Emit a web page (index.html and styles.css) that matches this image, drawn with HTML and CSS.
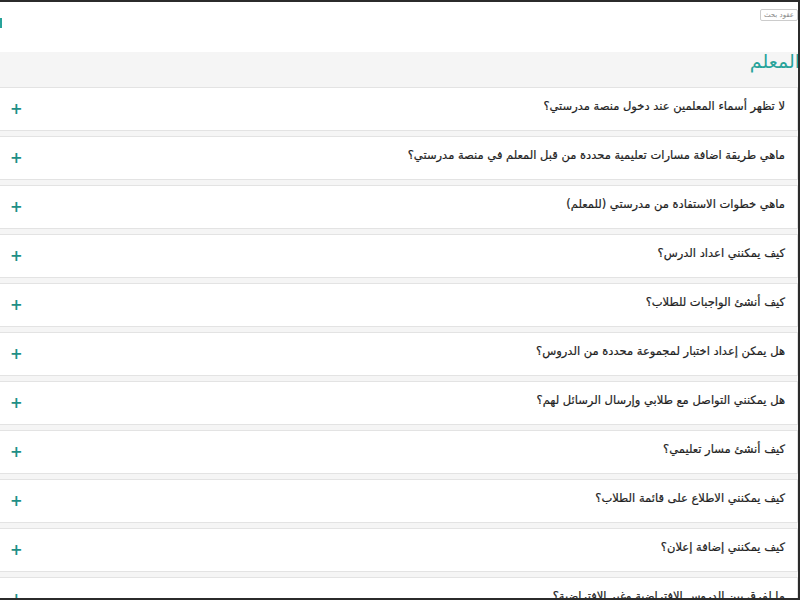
FILE: index.html
```html
<!DOCTYPE html>
<html lang="ar" dir="rtl">
  <head>
    <meta charset="UTF-8" />
    <title>الأسئلة الشائعة - المعلم</title>
    <link rel="stylesheet" href="styles.css">
  </head>
  <body>
    <div class="frame">
      <header class="topbar">
        <span class="topbar-btn">عقود بحث</span>
        <span class="topbar-mark"></span>
      </header>

      <section class="faq">
        <h2 class="faq-title">المعلم</h2>
        <div class="faq-list">
          <div class="faq-item"><span class="q">لا تظهر أسماء المعلمين عند دخول منصة مدرستي؟</span><span class="plus">+</span></div>
          <div class="faq-item"><span class="q">ماهي طريقة اضافة مسارات تعليمية محددة من قبل المعلم في منصة مدرستي؟</span><span class="plus">+</span></div>
          <div class="faq-item"><span class="q">ماهي خطوات الاستفادة من مدرستي (للمعلم)</span><span class="plus">+</span></div>
          <div class="faq-item"><span class="q">كيف يمكنني اعداد الدرس؟</span><span class="plus">+</span></div>
          <div class="faq-item"><span class="q">كيف أنشئ الواجبات للطلاب؟</span><span class="plus">+</span></div>
          <div class="faq-item"><span class="q">هل يمكن إعداد اختبار لمجموعة محددة من الدروس؟</span><span class="plus">+</span></div>
          <div class="faq-item"><span class="q">هل يمكنني التواصل مع طلابي وإرسال الرسائل لهم؟</span><span class="plus">+</span></div>
          <div class="faq-item"><span class="q">كيف أنشئ مسار تعليمي؟</span><span class="plus">+</span></div>
          <div class="faq-item"><span class="q">كيف يمكنني الاطلاع على قائمة الطلاب؟</span><span class="plus">+</span></div>
          <div class="faq-item"><span class="q">كيف يمكنني إضافة إعلان؟</span><span class="plus">+</span></div>
          <div class="faq-item"><span class="q">ما لفرق بين الدروس الافتراضية وغير الافتراضية؟</span><span class="plus">+</span></div>
        </div>
      </section>
    </div>
  </body>
</html>
```

FILE: styles.css
```css
/* Page frame */
html, body {
  margin: 0;
  padding: 0;
}

body {
  font-family: "DejaVu Sans", "Noto Sans", sans-serif;
  color: #333;
  background: #fff;
}

.frame {
  height: 600px;
  box-sizing: border-box;
  overflow: hidden;
  border-top: 2px solid #2b2b2b;
  border-right: 2px solid #2b2b2b;
  border-bottom: 2px solid #2b2b2b;
}

/* Top bar */
.topbar {
  height: 50px;
  background: #fff;
  display: flex;
  justify-content: space-between;
  align-items: flex-start;
}

.topbar-btn {
  margin-top: 7px;
  padding: 1px 3px;
  font-size: 7px;
  color: #888;
  border: 1px solid #ccc;
  border-radius: 2px;
}

.topbar-mark {
  width: 2px;
  height: 10px;
  margin-top: 16px;
  background: #27a39a;
}

/* FAQ section */
.faq {
  background: #f5f5f5;
  height: 100%;
}

.faq-title {
  margin: 0 -2px 0 0;
  padding: 0;
  height: 35px;
  font-size: 19px;
  font-weight: normal;
  line-height: 18px;
  color: #27a39a;
}

.faq-list {
  display: flex;
  flex-direction: column;
  gap: 5px;
  margin-left: -4px;
}

.faq-item {
  height: 42px;
  display: flex;
  align-items: center;
  justify-content: space-between;
  padding: 0 12px 0 13px;
  background: #fff;
  border: 1px solid #e3e3e3;
}

.q {
  font-size: 11.5px;
  color: #222;
  margin-top: -7px;
  -webkit-text-stroke: 0.2px #222;
}

.plus {
  font-size: 15px;
  font-weight: bold;
  line-height: 1;
  color: #1f8f86;
}
```
